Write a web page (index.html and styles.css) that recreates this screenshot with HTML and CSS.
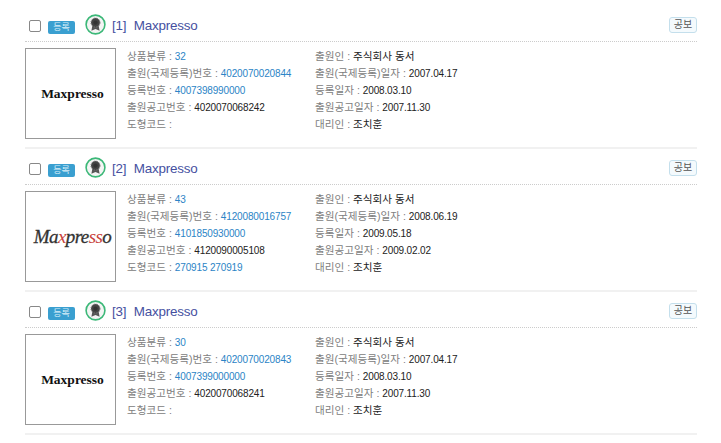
FILE: index.html
```html
<!DOCTYPE html>
<html lang="ko">
<head>
  <meta charset="UTF-8" />
  <meta name="viewport" content="width=device-width, initial-scale=1.0" />
  <title>상표 검색 결과</title>
  <link rel="stylesheet" href="styles.css">
</head>
<body>
  <div class="result-list">

    <div class="result-item">
      <div class="item-head">
        <span class="check"></span>
        <span class="status">등록</span>
        <svg class="medal" width="21" height="21" viewBox="0 0 21 21"><circle cx="10.5" cy="10.5" r="9.4" fill="#f4f4f4" stroke="#3cb878" stroke-width="1.6"/><path d="M7.4 11.5 L6.4 16.8 L10.5 15 L14.6 16.8 L13.6 11.5 Z" fill="#555"/><circle cx="10.5" cy="8.6" r="4.5" fill="#444" stroke="#777" stroke-width="1" stroke-dasharray="1.4 1"/><circle cx="10.5" cy="8.6" r="2.2" fill="#333"/></svg>
        <span class="item-title">[1] Maxpresso</span>
        <span class="btn-gazette">공보</span>
      </div>
      <div class="item-body">
        <div class="mark-box"><span class="mark-serif">Maxpresso</span></div>
        <div class="info-col col-a">
          <div>상품분류 : <span class="link">32</span></div>
          <div>출원(국제등록)번호 : <span class="link">4020070020844</span></div>
          <div>등록번호 : <span class="link">4007398990000</span></div>
          <div>출원공고번호 : <span class="val">4020070068242</span></div>
          <div>도형코드 :</div>
        </div>
        <div class="info-col">
          <div>출원인 : <span class="val-ko">주식회사 동서</span></div>
          <div>출원(국제등록)일자 : <span class="val">2007.04.17</span></div>
          <div>등록일자 : <span class="val">2008.03.10</span></div>
          <div>출원공고일자 : <span class="val">2007.11.30</span></div>
          <div>대리인 : <span class="val-ko">조치훈</span></div>
        </div>
      </div>
    </div>

    <div class="result-item">
      <div class="item-head">
        <span class="check"></span>
        <span class="status">등록</span>
        <svg class="medal" width="21" height="21" viewBox="0 0 21 21"><circle cx="10.5" cy="10.5" r="9.4" fill="#f4f4f4" stroke="#3cb878" stroke-width="1.6"/><path d="M7.4 11.5 L6.4 16.8 L10.5 15 L14.6 16.8 L13.6 11.5 Z" fill="#555"/><circle cx="10.5" cy="8.6" r="4.5" fill="#444" stroke="#777" stroke-width="1" stroke-dasharray="1.4 1"/><circle cx="10.5" cy="8.6" r="2.2" fill="#333"/></svg>
        <span class="item-title">[2] Maxpresso</span>
        <span class="btn-gazette">공보</span>
      </div>
      <div class="item-body">
        <div class="mark-box"><span class="mark-script">Ma<b>x</b>pre<b>ss</b>o</span></div>
        <div class="info-col col-a">
          <div>상품분류 : <span class="link">43</span></div>
          <div>출원(국제등록)번호 : <span class="link">4120080016757</span></div>
          <div>등록번호 : <span class="link">4101850930000</span></div>
          <div>출원공고번호 : <span class="val">4120090005108</span></div>
          <div>도형코드 : <span class="link">270915 270919</span></div>
        </div>
        <div class="info-col">
          <div>출원인 : <span class="val-ko">주식회사 동서</span></div>
          <div>출원(국제등록)일자 : <span class="val">2008.06.19</span></div>
          <div>등록일자 : <span class="val">2009.05.18</span></div>
          <div>출원공고일자 : <span class="val">2009.02.02</span></div>
          <div>대리인 : <span class="val-ko">조치훈</span></div>
        </div>
      </div>
    </div>

    <div class="result-item">
      <div class="item-head">
        <span class="check"></span>
        <span class="status">등록</span>
        <svg class="medal" width="21" height="21" viewBox="0 0 21 21"><circle cx="10.5" cy="10.5" r="9.4" fill="#f4f4f4" stroke="#3cb878" stroke-width="1.6"/><path d="M7.4 11.5 L6.4 16.8 L10.5 15 L14.6 16.8 L13.6 11.5 Z" fill="#555"/><circle cx="10.5" cy="8.6" r="4.5" fill="#444" stroke="#777" stroke-width="1" stroke-dasharray="1.4 1"/><circle cx="10.5" cy="8.6" r="2.2" fill="#333"/></svg>
        <span class="item-title">[3] Maxpresso</span>
        <span class="btn-gazette">공보</span>
      </div>
      <div class="item-body">
        <div class="mark-box"><span class="mark-serif">Maxpresso</span></div>
        <div class="info-col col-a">
          <div>상품분류 : <span class="link">30</span></div>
          <div>출원(국제등록)번호 : <span class="link">4020070020843</span></div>
          <div>등록번호 : <span class="link">4007399000000</span></div>
          <div>출원공고번호 : <span class="val">4020070068241</span></div>
          <div>도형코드 :</div>
        </div>
        <div class="info-col">
          <div>출원인 : <span class="val-ko">주식회사 동서</span></div>
          <div>출원(국제등록)일자 : <span class="val">2007.04.17</span></div>
          <div>등록일자 : <span class="val">2008.03.10</span></div>
          <div>출원공고일자 : <span class="val">2007.11.30</span></div>
          <div>대리인 : <span class="val-ko">조치훈</span></div>
        </div>
      </div>
    </div>

  </div>
</body>
</html>
```

FILE: styles.css
```css
body {
  margin: 0;
  background: #fff;
  font-family: "Liberation Sans", "Noto Sans CJK KR", sans-serif;
  font-size: 10.6px;
  color: #808080;
  overflow: hidden;
}

.result-list {
  width: 672px;
  margin-left: 25px;
  padding-top: 12px;
}

.result-item {
  height: 135px;
  margin-bottom: 6px;
  border-bottom: 2px solid #f1f1f1;
}

.item-head {
  display: flex;
  align-items: center;
  height: 26px;
  padding-bottom: 3px;
  border-bottom: 1px dotted #ccc;
}

.check {
  width: 10px;
  height: 10px;
  margin-left: 4px;
  margin-top: 1px;
  border: 1px solid #888;
  border-radius: 2px;
  background: #fff;
}

.status {
  width: 27px;
  height: 13px;
  margin-left: 7px;
  margin-top: 5px;
  border-radius: 2px;
  background: #3a9fd0;
  color: #d8eef8;
  font-size: 9px;
  line-height: 13px;
  text-align: center;
}

.medal {
  margin-left: 10px;
  margin-top: -2px;
}

.item-title {
  margin-left: 6px;
  font-size: 13.4px;
  letter-spacing: -0.2px;
  word-spacing: 4px;
  color: #45509f;
}

.btn-gazette {
  margin-left: auto;
  width: 26px;
  height: 14px;
  border: 1px solid #c4dfec;
  border-radius: 3px;
  background: #f4fafd;
  color: #555;
  font-size: 10px;
  line-height: 14px;
  text-align: center;
}

.item-body {
  display: flex;
  padding-top: 6px;
}

.mark-box {
  flex: none;
  display: flex;
  align-items: center;
  justify-content: center;
  box-sizing: border-box;
  width: 91px;
  height: 91px;
  padding-left: 4px;
  border: 1px solid #999;
  background: #fff;
}

.mark-serif {
  font-family: "Liberation Serif", serif;
  font-size: 13.5px;
  font-weight: bold;
  color: #111;
}

.mark-script {
  font-family: "Liberation Serif", serif;
  font-style: italic;
  font-size: 19px;
  letter-spacing: -0.6px;
  color: #333;
  -webkit-text-stroke: 0.3px #333;
}

.mark-script b {
  font-weight: normal;
  color: #c8423c;
  -webkit-text-stroke: 0;
}

.info-col {
  line-height: 17px;
  white-space: nowrap;
}

.col-a {
  width: 188px;
  margin-left: 11px;
}

.link {
  font-size: 10px;
  color: #2b84c6;
  letter-spacing: -0.15px;
}

.val {
  font-size: 10px;
  color: #222;
  letter-spacing: -0.15px;
}

.val-ko {
  color: #222;
}
```
